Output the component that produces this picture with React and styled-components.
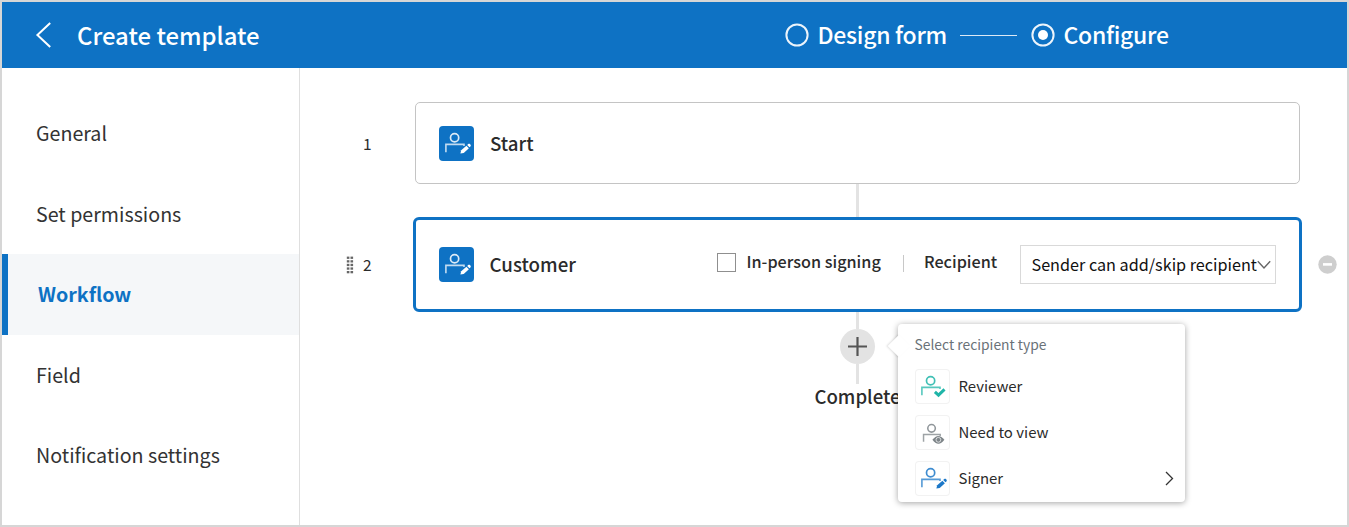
import React from "react";
import styled, { createGlobalStyle, css } from "styled-components";

const blue = "#0e72c4";

const GlobalStyle = createGlobalStyle`
  *, *::before, *::after { box-sizing: border-box; }
  body {
    margin: 0;
    background: #fff;
    color: #2b2b2b;
    font-family: "Noto Sans CJK SC", "Noto Sans", sans-serif;
  }
`;

const Frame = styled.div`
  display: flex;
  flex-direction: column;
  width: 1349px;
  height: 527px;
  border: 2px solid #d6d6d6;
  overflow: hidden;
`;

const Header = styled.header`
  flex: none;
  display: flex;
  align-items: center;
  height: 66px;
  padding-left: 33px;
  background: ${blue};
  color: #fff;
`;

const Title = styled.h1`
  width: 708px;
  margin: 0 0 0 25px;
  font-size: 23.9px;
  line-height: 36px;
  font-weight: 500;
`;

const Steps = styled.div`
  display: flex;
  align-items: center;
`;

const StepLine = styled.span`
  width: 57px;
  height: 1px;
  margin: 0 14px;
  background: #dbe9f6;
`;

const StepLabel = styled.span`
  margin: -2px 0 0 8.5px;
  width: ${(p) => p.$width}px;
  font-size: 23px;
  letter-spacing: -0.28px;
  line-height: 36px;
  font-weight: 500;
  white-space: nowrap;
`;

const Body = styled.div`
  flex: 1;
  display: flex;
`;

const Sidebar = styled.nav`
  flex: none;
  width: 298px;
  padding-top: 25px;
  border-right: 1px solid #dfdfdf;
`;

const NavItem = styled.div`
  display: flex;
  align-items: center;
  height: 80.5px;
  padding: 0 0 1.5px 34px;
  font-size: 19.65px;
  color: #333;
  ${(p) =>
    p.$active &&
    css`
      padding-left: 30px;
      border-left: 6px solid ${blue};
      background: #f5f7f9;
      color: ${blue};
      font-weight: 700;
    `}
`;

const Canvas = styled.main`
  flex: 1;
  padding-top: 34px;
`;

const StepRow = styled.div`
  display: flex;
  align-items: center;
`;

const RowHandle = styled.div`
  flex: none;
  display: flex;
  align-items: center;
  justify-content: flex-end;
  gap: 9px;
  width: 71.5px;
  margin-right: ${(p) => (p.$active ? 41.5 : 43.5)}px;
  font-size: 15.5px;
`;

const RowNumber = styled.span`
  margin-top: -1px;
`;

const Card = styled.section`
  display: flex;
  align-items: center;
  width: ${(p) => (p.$active ? 889 : 885)}px;
  height: ${(p) => (p.$active ? 95 : 82)}px;
  padding: 0 ${(p) => (p.$active ? "23.5px 0 22.5px" : "23px")};
  border: ${(p) => (p.$active ? `3px solid ${blue}` : "1px solid #c4c4c4")};
  border-radius: ${(p) => (p.$active ? 6 : 5)}px;
`;

const RoleTile = styled.span`
  flex: none;
  display: flex;
  width: 35px;
  height: 35px;
  border-radius: 4px;
  background: ${(p) => (p.$outlined ? "#fff" : blue)};
  box-shadow: ${(p) => (p.$outlined ? "inset 0 0 0 1px #f2f2f2" : "none")};
  color: ${(p) => p.$color || "#fff"};
`;

const CardTitle = styled.h2`
  flex: 1;
  margin: -1px 0 0 16px;
  font-size: 18.7px;
  line-height: 30px;
  font-weight: 500;
`;

const Options = styled.div`
  display: flex;
  align-items: center;
`;

const Checkbox = styled.span`
  width: 19px;
  height: 19px;
  margin: 0 11px 5px 0;
  border: 1px solid #8f8f8f;
`;

const OptionLabel = styled.span`
  width: ${(p) => p.$width}px;
  margin-top: -8px;
  font-size: 16.2px;
  line-height: 24px;
  font-weight: 500;
  white-space: nowrap;
`;

const Divider = styled.span`
  width: 1px;
  height: 17px;
  margin: 0 20px 3px 22px;
  background: #c8c8c8;
`;

const Select = styled.div`
  display: flex;
  align-items: center;
  width: 256px;
  height: 39px;
  padding-left: 11px;
  border: 1px solid #d9d9d9;
  font-size: 16.2px;
  color: #111;
  white-space: nowrap;
`;

const SelectText = styled.span`
  flex: none;
  width: 225px;
  margin-top: -2px;
`;

const SelectArrow = styled.svg`
  flex: none;
`;

const RemoveButton = styled.span`
  display: flex;
  margin-left: 16px;
`;

const Stem = styled.div`
  width: 3px;
  height: ${(p) => p.$height}px;
  margin-left: 556px;
  background: #e3e3e3;
`;

const AddAnchor = styled.div`
  position: relative;
  width: 35px;
  height: 35px;
  margin-left: 540px;
`;

const AddButton = styled.div`
  display: flex;
  align-items: center;
  justify-content: center;
  width: 35px;
  height: 35px;
  border-radius: 50%;
  background: #e3e3e3;
`;

const CompleteLabel = styled.div`
  width: 115px;
  margin: -1px 0 0 500px;
  text-align: center;
  font-size: 18.6px;
  line-height: 26px;
  font-weight: 500;
`;

const Popover = styled.div`
  position: absolute;
  left: 58px;
  top: -5.5px;
  z-index: 2;
  width: 287px;
  height: 178.5px;
  padding: 8px 0 0 16.5px;
  border-radius: 4px;
  background: #fff;
  box-shadow: 0 1px 6px rgba(0, 0, 0, 0.36);
  font-size: 15px;
  &::before {
    content: "";
    position: absolute;
    left: -7px;
    top: 14px;
    width: 16px;
    height: 16px;
    transform: rotate(45deg);
    background: #fff;
    box-shadow: -1px 1px 2px rgba(0, 0, 0, 0.12);
  }
`;

const PopoverTitle = styled.div`
  margin-bottom: 13px;
  font-size: 13.85px;
  line-height: 24px;
  color: #6a7278;
`;

const PopoverItem = styled.div`
  display: flex;
  align-items: center;
  gap: 9px;
  height: 35px;
  margin-bottom: 11px;
`;

const ItemName = styled.span`
  width: 197px;
  line-height: 24px;
  font-size: 14.95px;
`;

function PersonIcon({ kind }) {
  return (
    <svg width="35" height="35" viewBox="0 0 35 35" fill="none" stroke="currentColor">
      <g transform={kind === "view" ? "translate(2.2 2.6) scale(.92)" : undefined}>
        <circle cx="15.6" cy="11.7" r="4.1" strokeWidth="1.7" opacity=".85" />
        <path d="M6.9 26.3V18.4H25V20" strokeWidth="1.6" opacity=".75" />
      </g>
      {kind === "sign" && (
        <g fill="currentColor" stroke="none">
          <path d="M21.4 27.6l.8-3.4 5.2-4.5 2.5 2.6-5.2 4.6z" />
          <path d="M28.2 19l1-.9c.6-.5 1.3-.5 1.8 0l.5.6c.5.6.4 1.3-.1 1.7l-.9.8z" />
        </g>
      )}
      {kind === "check" && <path d="M19.9 22.8l3.6 3.3 6-5.8" strokeWidth="3" />}
      {kind === "view" && (
        <>
          <path d="M17.4 24.8Q23.4 17 29.4 24.8Q23.4 32.6 17.4 24.8Z" fill="currentColor" stroke="none" />
          <circle cx="23.4" cy="24.8" r="2.4" stroke="#fff" strokeWidth=".7" fill="currentColor" />
        </>
      )}
    </svg>
  );
}

function StepDot({ active }) {
  return (
    <svg width="24" height="24" viewBox="0 0 24 24" fill="none">
      <circle cx="12" cy="12" r="10.6" stroke="#fff" strokeWidth="2" opacity=".92" />
      {active && <circle cx="12" cy="12" r="5" fill="#fff" />}
    </svg>
  );
}

function Grip() {
  const dots = [];
  for (let y = 0; y < 5; y++) for (let x = 0; x < 2; x++) dots.push([x, y]);
  return (
    <svg width="8" height="18" viewBox="0 0 8 18" fill="#666">
      {dots.map(([x, y]) => (
        <rect key={`${x}-${y}`} x={x * 3.7 + 0.8} y={y * 3.6 + 0.6} width="2.6" height="2.3" />
      ))}
    </svg>
  );
}

const navItems = ["General", "Set permissions", "Workflow", "Field", "Notification settings"];

const recipientTypes = [
  { name: "Reviewer", kind: "check", color: "#1fb5a8" },
  { name: "Need to view", kind: "view", color: "#7d8488" },
  { name: "Signer", kind: "sign", color: "#1c78c8", more: true },
];

export default function App() {
  return (
    <>
      <GlobalStyle />
      <Frame>
        <Header>
          <svg width="17" height="26" viewBox="0 0 17 26" fill="none" stroke="#fff" strokeWidth="2">
            <path d="M15.2 1L2.4 13L15.2 25" />
          </svg>
          <Title>Create template</Title>
          <Steps>
            <StepDot />
            <StepLabel $width={128.5}>Design form</StepLabel>
            <StepLine />
            <StepDot active />
            <StepLabel $width={110}>Configure</StepLabel>
          </Steps>
        </Header>
        <Body>
          <Sidebar>
            {navItems.map((name) => (
              <NavItem key={name} $active={name === "Workflow"}>
                <span>{name}</span>
              </NavItem>
            ))}
          </Sidebar>
          <Canvas>
            <StepRow>
              <RowHandle>
                <RowNumber>1</RowNumber>
              </RowHandle>
              <Card>
                <RoleTile>
                  <PersonIcon kind="sign" />
                </RoleTile>
                <CardTitle>Start</CardTitle>
              </Card>
            </StepRow>
            <Stem $height={33} />
            <StepRow>
              <RowHandle $active>
                <Grip />
                <RowNumber>2</RowNumber>
              </RowHandle>
              <Card $active>
                <RoleTile>
                  <PersonIcon kind="sign" />
                </RoleTile>
                <CardTitle>Customer</CardTitle>
                <Options>
                  <Checkbox />
                  <OptionLabel $width={134.5}>In-person signing</OptionLabel>
                  <Divider />
                  <OptionLabel $width={95.5}>Recipient</OptionLabel>
                  <Select>
                    <SelectText>Sender can add/skip recipient</SelectText>
                    <SelectArrow width="14" height="10" viewBox="0 0 14 10" fill="none" stroke="#666" strokeWidth="1.4">
                      <path d="M.8 1.2L7 8L13.2 1.2" />
                    </SelectArrow>
                  </Select>
                </Options>
              </Card>
              <RemoveButton>
                <svg width="19" height="19" viewBox="0 0 19 19">
                  <circle cx="9.5" cy="9.5" r="9.2" fill="#cecece" />
                  <rect x="5" y="8.1" width="9" height="2.6" fill="#fff" />
                </svg>
              </RemoveButton>
            </StepRow>
            <Stem $height={17} />
            <AddAnchor>
              <AddButton>
                <svg width="19" height="19" viewBox="0 0 19 19" stroke="#555" strokeWidth="2.2">
                  <path d="M9.5 0V19M0 9.5H19" />
                </svg>
              </AddButton>
              <Popover>
                <PopoverTitle>Select recipient type</PopoverTitle>
                {recipientTypes.map((t) => (
                  <PopoverItem key={t.name}>
                    <RoleTile $outlined $color={t.color}>
                      <PersonIcon kind={t.kind} />
                    </RoleTile>
                    <ItemName>{t.name}</ItemName>
                    {t.more && (
                      <svg width="9" height="15" viewBox="0 0 9 15" fill="none" stroke="#333" strokeWidth="1.3">
                        <path d="M1 1L7.5 7.5L1 14" />
                      </svg>
                    )}
                  </PopoverItem>
                ))}
              </Popover>
            </AddAnchor>
            <Stem $height={20} />
            <CompleteLabel>Complete</CompleteLabel>
          </Canvas>
        </Body>
      </Frame>
    </>
  );
}
